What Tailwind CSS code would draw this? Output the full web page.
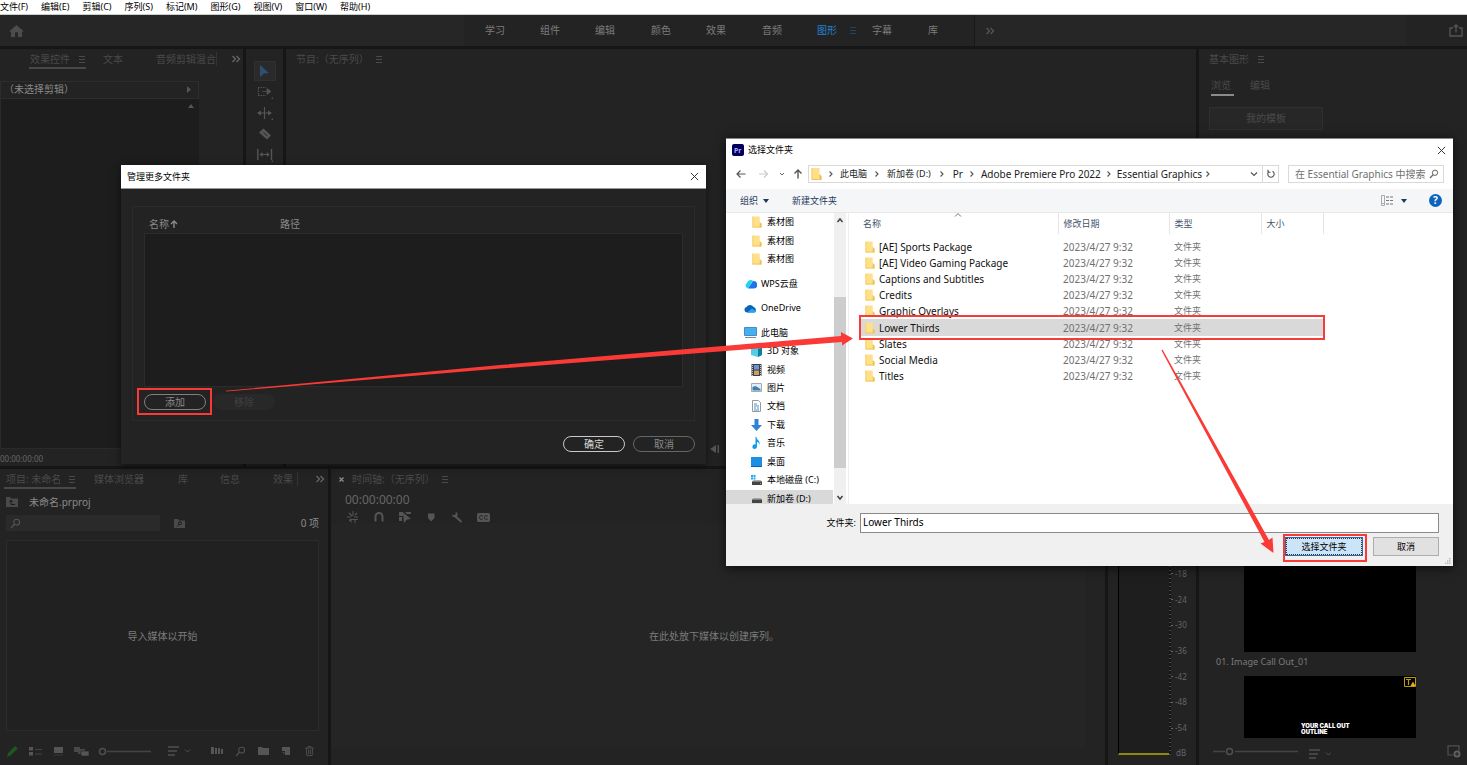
<!DOCTYPE html>
<html lang="zh-CN">

<head>
    <meta charset="UTF-8">
    <meta name="viewport" content="width=device-width, initial-scale=1.0">
    <title>选择文件夹</title>
    <script src="https://cdn.jsdelivr.net/npm/@tailwindcss/browser@4"></script>
</head>

<body class="relative flex flex-col h-screen overflow-hidden bg-[#161616] text-[#4a4a4a] text-[10px] leading-[14px] whitespace-nowrap font-['Noto_Sans','Noto_Sans_CJK_SC',sans-serif]">

    <!-- shared icons -->
    <svg class="hidden">
        <symbol id="burger" viewBox="0 0 8 8"><path d="M1 1.500h6M1 4.500h6M1 7.500h6" stroke="currentColor" fill="none"/></symbol>
        <symbol id="more" viewBox="0 0 10 8"><path d="M1.500 1l3 3-3 3M5.500 1l3 3-3 3" stroke="currentColor" stroke-width="1.300" fill="none"/></symbol>
        <symbol id="folder" viewBox="0 0 11 12"><path d="M.5 0h8v5.500L10.500 8v4H.5z" fill="#ffe08a"/><path d="M.5 0h1v12h-1z" fill="#f3cd65"/><path d="M8.500 6.500l2 1.500v4h-2z" fill="#edc04f"/><path d="M1 11.500h8" stroke="#edc55c"/></symbol>
        <symbol id="chev" viewBox="0 0 6 8"><path d="M1.500 1.500L4 4 1.500 6.500" stroke="#555" stroke-width="1.100" fill="none"/></symbol>
        <symbol id="lens" viewBox="0 0 12 12"><circle cx="7.200" cy="4.500" r="3.200" stroke="currentColor" stroke-width="1.200" fill="none"/><path d="M4.900 6.900L1.200 10.800" stroke="currentColor" stroke-width="1.500"/></symbol>
        <symbol id="close" viewBox="0 0 10 10"><path d="M1 1l8 8M9 1L1 9" stroke="#333" stroke-width="1.100"/></symbol>
        <symbol id="sort" viewBox="0 0 22 10"><path d="M0 1h11M0 5h9M0 9h7" stroke="currentColor" stroke-width="1.500"/><path d="M17 3.500l2.500 2.500L22 3.500" stroke="currentColor" fill="none"/></symbol>
    </svg>

    <!-- menu bar -->
    <nav class="flex gap-[13px] h-[15px] shrink-0 bg-white border-b border-[#c9cfc9] text-[9px] leading-[14px] text-black">
        <a href="#">文件(F)</a>
        <a href="#">编辑(E)</a>
        <a href="#">剪辑(C)</a>
        <a href="#">序列(S)</a>
        <a href="#">标记(M)</a>
        <a href="#">图形(G)</a>
        <a href="#">视图(V)</a>
        <a href="#">窗口(W)</a>
        <a href="#">帮助(H)</a>
    </nav>

    <!-- workspaces -->
    <header class="flex items-center h-[31px] shrink-0 bg-[#262626] text-[#7c7c7c]">
        <div class="w-[464px] pl-[9px]">
            <svg class="w-[15px] h-[14px] text-[#4c4c4c]" viewBox="0 0 15 14"><path d="M7.500 1L15 7.500h-2V13H9V9.500a1.500 1.500 0 0 0-3 0V13H2V7.500H0z" fill="currentColor"/></svg>
        </div>
        <div class="flex items-center h-full w-[511px] pl-[21px] pb-[2px] bg-[#232323] border-r border-[#181818]">
            <a href="#" class="w-[55px]">学习</a>
            <a href="#" class="w-[55px]">组件</a>
            <a href="#" class="w-[56px]">编辑</a>
            <a href="#" class="w-[55px]">颜色</a>
            <a href="#" class="w-[56px]">效果</a>
            <a href="#" class="w-[55px]">音频</a>
            <a href="#" class="flex items-center gap-3 w-[55px] text-[#2680d0]">图形 <svg class="size-2 text-[#1f4566]"><use href="#burger"/></svg></a>
            <a href="#" class="w-[56px]">字幕</a>
            <a href="#">库</a>
        </div>
        <svg class="w-[10px] h-2 ml-[10px] text-[#555]"><use href="#more"/></svg>
        <div class="flex justify-end items-center w-[61px] h-full ml-auto pr-1 bg-[#232323]">
            <svg class="w-[14px] h-[13px]" viewBox="0 0 14 13"><path d="M4 4H1v8h12V4h-3M7 8.500V1M4.800 3L7 1l2.200 2" stroke="#555" stroke-width="1.300" fill="none"/></svg>
        </div>
    </header>

    <main class="flex flex-1 min-h-0 gap-[3px] pt-[3px]">
        <div class="flex flex-col flex-1 min-w-0 gap-[3px]">
            <!-- upper row -->
            <div class="flex h-[417px] gap-[3px]">
                <!-- effect controls -->
                <section class="flex flex-col w-[243px] bg-[#232323]">
                    <div class="flex items-center h-5 pl-[29px] pr-[2px]">
                        <div class="flex items-center justify-between w-[57px] h-full border-b-2 border-[#484848] pt-[2px] pl-[1px]">效果控件 <svg class="size-2"><use href="#burger"/></svg></div>
                        <span class="ml-[17px]">文本</span>
                        <span class="ml-[33px] border-r border-[#333]">音频剪辑混合</span>
                        <svg class="w-[10px] h-2 ml-auto text-[#666]"><use href="#more"/></svg>
                    </div>
                    <div class="flex items-center justify-between w-[199px] h-[18px] mt-3 pl-[3px] pr-[7px] pb-[2px] border border-[#2d2d2d] text-[#8a8a8a]">（未选择剪辑）
                        <svg class="w-1 h-[7px]" viewBox="0 0 4 7"><path d="M0 0l4 3.500L0 7z" fill="#555"/></svg>
                    </div>
                    <div class="flex justify-end flex-1 w-[199px] bg-[#1d1d1d] border-l border-b border-[#2a2a2a] pt-[5px] pr-[5px]">
                        <svg class="w-[6px] h-1" viewBox="0 0 6 4"><path d="M0 4l3-4 3 4z" fill="#555"/></svg>
                    </div>
                    <p class="h-[17px] text-[8px] leading-[20px] text-[#666]">00:00:00:00</p>
                </section>
                <!-- tools -->
                <section class="flex flex-col items-center gap-[7px] w-[37px] bg-[#232323] pt-3 text-[#555]">
                    <div class="flex items-center justify-center w-[22px] h-5 bg-[#2a2a2a] border border-[#303030]">
                        <svg class="w-[9px] h-3" viewBox="0 0 9 12"><path d="M0 0l9 8-5 .5L0 12z" fill="#2c4f73"/></svg>
                    </div>
                    <svg class="w-[16px] h-[14px] -mt-[3px]" viewBox="0 0 16 14"><path d="M1 2.500h8M1 10.500h8M1.500 3v8" stroke="currentColor" stroke-dasharray="1.500 1" fill="none"/><path d="M5 6.500h6M10 3.500l4 3-4 3z" stroke="currentColor" fill="currentColor" stroke-width=".7"/><path d="M16 12v2h-2z" fill="currentColor"/></svg>
                    <svg class="w-[16px] h-[14px]" viewBox="0 0 16 14"><path d="M7.500 1v12M1 7h13" stroke="currentColor" stroke-width="1.200"/><path d="M0 7l4-2.500v5zM15 7l-4-2.500v5zM16 12v2h-2z" fill="currentColor"/></svg>
                    <svg class="w-[16px] h-[14px]" viewBox="0 0 16 14"><path d="M2 5.500l4.500-4 7.500 7-4 4z" fill="currentColor"/><path d="M6.500 5.500l4 3.500" stroke="#232323"/></svg>
                    <svg class="w-[16px] h-[14px]" viewBox="0 0 16 14"><path d="M.8 1v11M14.500 1v11" stroke="currentColor" stroke-width="1.400"/><path d="M4 6.500h8" stroke="currentColor"/><path d="M2.500 6.500l3-2.500v5zM12.800 6.500l-3-2.500v5zM16 12v2h-2z" fill="currentColor"/></svg>
                </section>
                <!-- program monitor -->
                <section class="flex flex-col justify-between flex-1 bg-[#232323]">
                    <div class="flex items-center gap-[6px] h-5 pl-[10px]">节目:（无序列） <svg class="size-2"><use href="#burger"/></svg></div>
                    <div class="h-[21px] pl-[424px]">
                        <svg class="w-[9px] h-2" viewBox="0 0 9 8"><path d="M6 0v8L0 4zM7.500 0H9v8H7.500z" fill="#555"/></svg>
                    </div>
                </section>
            </div>

            <!-- lower row -->
            <div class="flex flex-1 min-h-0 gap-[3px]">
                <!-- project -->
                <section class="flex flex-col w-[328px] bg-[#232323]">
                    <div class="flex items-center h-5 pl-1 pr-[3px]">
                        <div class="flex items-center justify-between w-[72px] h-full pt-[2px] pl-[2px] border-b-2 border-[#484848]">项目: 未命名 <svg class="size-2"><use href="#burger"/></svg></div>
                        <span class="ml-[18px]">媒体浏览器</span>
                        <span class="ml-[34px]">库</span>
                        <span class="ml-[32px]">信息</span>
                        <span class="ml-[33px] pr-1 border-r border-[#333]">效果</span>
                        <svg class="w-[10px] h-2 ml-auto text-[#666]"><use href="#more"/></svg>
                    </div>
                    <div class="flex items-center gap-[11px] h-[26px] pl-[6px] text-[#8a8a8a]">
                        <svg class="w-[12px] h-[10px]" viewBox="0 0 12 10"><path d="M0 0h4l1 1.500h7V10H0z" fill="#4a4a4a"/><path d="M5 3.500v4h4M3.500 5L5 3l1.500 2" stroke="#1c1c1c" fill="none"/></svg>
                        未命名.prproj
                    </div>
                    <div class="flex items-center h-4 pl-[6px] pr-[9px] text-[#8a8a8a]">
                        <label class="flex items-center w-[154px] h-4 pl-1 bg-[#2a2a2a] text-[#555]">
                            <svg class="size-[11px] shrink-0"><use href="#lens"/></svg>
                            <input type="text" aria-label="搜索" class="w-full outline-none">
                        </label>
                        <svg class="w-[11px] h-[9px] ml-[14px]" viewBox="0 0 11 9"><path d="M0 0h4l1 1.500h6V9H0z" fill="#4a4a4a"/><circle cx="6" cy="4.200" r="1.500" stroke="#1c1c1c" fill="none"/><path d="M5 5.500L3 7.500" stroke="#1c1c1c"/></svg>
                        <span class="ml-auto">0 项</span>
                    </div>
                    <div class="flex items-center justify-center flex-1 mt-[9px] ml-[6px] mr-[9px] border border-[#2c2c2c] bg-[#212121] text-[#7c7c7c]">导入媒体以开始</div>
                    <div class="flex items-center h-[34px] pl-[7px] pt-[6px]">
                        <svg class="w-[11px] h-[11px]" viewBox="0 0 11 11"><path d="M0 11l1-4 7-7 3 2.500-7.500 7z" fill="#1f5522"/></svg>
                        <svg class="w-[13px] h-[9px] ml-[11px]" viewBox="0 0 13 9"><path d="M0 0h4v3.500H0zM0 5h4v3.500H0z" fill="#555"/><path d="M6 2.500h7M6 7h7" stroke="#444"/></svg>
                        <svg class="w-[9px] h-[9px] ml-3" viewBox="0 0 9 9"><path d="M0 0h9v6H0z" fill="#555"/><path d="M0 8h9" stroke="#3a3a3a"/></svg>
                        <svg class="w-[15px] h-[9px] ml-[11px]" viewBox="0 0 15 9"><path d="M0 0h6v5H0zM4 2h7v5H4z" fill="#484848"/><path d="M7 4h8v5H7z" fill="#555" stroke="#232323" stroke-width=".6"/></svg>
                        <svg class="w-[53px] h-[9px] ml-[9px]" viewBox="0 0 53 9"><circle cx="4.500" cy="4.500" r="3" stroke="#505050" stroke-width="1.500" fill="none"/><path d="M9 4.500h44" stroke="#444" stroke-width="1.300"/></svg>
                        <svg class="w-[26px] h-[10px] ml-[15px] text-[#505050]"><use href="#sort"/></svg>
                        <svg class="w-[12px] h-[8px] ml-[19px]" viewBox="0 0 12 8"><path d="M0 0h3v7H0zM4 1h2v6H4zM7 1h2v6H7zM10 2h2v5h-2z" fill="#555"/></svg>
                        <svg class="size-[11px] ml-3 text-[#505050]"><use href="#lens"/></svg>
                        <svg class="w-[11px] h-2 ml-3" viewBox="0 0 11 8"><path d="M0 0h4l1 1h6v7H0z" fill="#555"/></svg>
                        <svg class="w-[8px] h-2 ml-[13px]" viewBox="0 0 8 8"><path d="M0 0h8v8H3V4H0z" fill="#555"/><path d="M0 5l2.500 3V5z" fill="#444"/></svg>
                        <svg class="w-[9px] h-[10px] ml-[15px]" viewBox="0 0 9 10"><path d="M0 2h9M3 1.500V.5h3v1M1.300 2l.5 7.500h5.400l.5-7.500M3.500 3.500v4.500M5.500 3.500v4.500" stroke="#4c4c4c" fill="none"/></svg>
                    </div>
                </section>
                <!-- timeline -->
                <section class="flex flex-col flex-1 bg-[#232323]">
                    <div class="flex items-center h-5 pl-2">
                        <svg class="w-[5px] h-[5px] mr-2" viewBox="0 0 5 5"><path d="M.5.5l4 4M4.500.5l-4 4" stroke="#8a8a8a" stroke-width="1.300"/></svg>
                        时间轴:（无序列）
                        <svg class="size-2 ml-[6px]"><use href="#burger"/></svg>
                    </div>
                    <p class="pl-[14px] h-[22px] text-[12px] leading-[22px] text-[#666]">00:00:00:00</p>
                    <div class="flex items-center gap-[14px] h-3 pl-4 text-[#555]">
                        <svg class="size-3" viewBox="0 0 12 12"><path d="M6 0v5M2 2l3 3M10 2L8 4M0 6h4M7 6h4M2 9.500L4.500 8M4 11.500v-3h7M8 9v3" stroke="currentColor" stroke-width="1.100" fill="none"/></svg>
                        <svg class="size-3" viewBox="0 0 12 12"><path d="M2.500 10.500V5.500a3.500 3.500 0 0 1 7 0v5" stroke="currentColor" stroke-width="2" fill="none"/></svg>
                        <svg class="size-3" viewBox="0 0 12 12"><path d="M0 1h4v4H0zM0 6h3v4H0zM6 1h6v2L8 3zM4 1.500L12 8l-4 .5L5 12z" fill="currentColor"/></svg>
                        <svg class="size-3" viewBox="0 0 12 12"><path d="M3 2.500h6.500v4.500L6.200 10.500 3 7z" fill="currentColor"/></svg>
                        <svg class="size-3" viewBox="0 0 12 12"><path d="M4 5l6.500 6" stroke="currentColor" stroke-width="2.200"/><path d="M1 3.500A3 3 0 0 0 5.500 6 3 3 0 0 0 4.500.8L4.800 3 3 4.200z" fill="currentColor"/></svg>
                        <svg class="w-[13px] h-[9px]" viewBox="0 0 13 9"><rect width="13" height="9" rx="1.500" fill="currentColor"/><path d="M5.800 3.200C4.500 2 2.500 2.600 2.500 4.500S4.500 7 5.800 5.800M10.800 3.200C9.500 2 7.500 2.600 7.500 4.500S9.500 7 10.800 5.800" stroke="#232323" fill="none"/></svg>
                    </div>
                    <div class="flex items-center justify-center flex-1 mr-5 mb-[17px] pl-3 bg-[#252525] text-[#7c7c7c]">在此处放下媒体以创建序列。</div>
                </section>
                <!-- audio meters -->
                <section class="flex w-[88px] bg-[#232323] pl-[10px]">
                    <div class="w-[51px] mb-[10px] bg-[#1e1e1e] border-l border-l-black border-b-2 border-b-[#8c8a12]"></div>
                    <div class="w-[2px] mb-[10px] bg-[repeating-linear-gradient(0deg,#484848_0px_1px,#161616_1px_4px)]"></div>
                    <ul class="flex flex-col justify-end flex-1 text-[8px] leading-[10px] text-[#666]">
                        <li class="flex flex-col h-[180px]">
                            <span class="flex items-center flex-1 gap-[2px]"><i class="w-[2px] h-px bg-[#666]"></i>-18</span>
                            <span class="flex items-center flex-1 gap-[2px]"><i class="w-[2px] h-px bg-[#666]"></i>-24</span>
                            <span class="flex items-center flex-1 gap-[2px]"><i class="w-[2px] h-px bg-[#666]"></i>-30</span>
                            <span class="flex items-center flex-1 gap-[2px]"><i class="w-[2px] h-px bg-[#666]"></i>-36</span>
                            <span class="flex items-center flex-1 gap-[2px]"><i class="w-[2px] h-px bg-[#666]"></i>-42</span>
                            <span class="flex items-center flex-1 gap-[2px]"><i class="w-[2px] h-px bg-[#666]"></i>-48</span>
                            <span class="flex items-center flex-1 gap-[2px]"><i class="w-[2px] h-px bg-[#666]"></i>-54</span>
                        </li>
                        <li class="flex items-center h-6 pl-[5px]">dB</li>
                    </ul>
                </section>
            </div>
        </div>

        <!-- essential graphics -->
        <aside class="flex flex-col w-[268px] bg-[#232323]">
            <div class="flex items-center gap-2 h-5 pl-[10px]">基本图形 <svg class="size-2"><use href="#burger"/></svg></div>
            <div class="flex gap-4 pl-3 mt-2 h-[19px]">
                <a href="#" class="w-[23px] border-b-2 border-[#8a8a8a] leading-[17px]">浏览</a>
                <a href="#" class="leading-[17px]">编辑</a>
            </div>
            <button class="w-[114px] h-[23px] mt-[11px] ml-[10px] pb-[2px] bg-[#272727] border border-[#2f2f2f]">我的模板</button>
            <div class="flex flex-col items-center justify-end flex-1">
                <div class="w-[172px] h-24 mr-[6px] bg-black"></div>
                <p class="self-start pl-[17px] h-6 text-[9px] leading-[20px] text-[#7c7c7c]">01. Image Call Out_01</p>
                <div class="relative w-[172px] h-[62px] mr-[6px] bg-black pl-[57px] pt-[47px] text-[6px] leading-[6px] font-black text-white font-[Inter,sans-serif]">
                    YOUR CALL OUT<br>OUTLINE
                    <svg class="absolute right-0 top-[1px] w-3 h-[10px]" viewBox="0 0 12 10"><path d="M.5.5h11v9H.5z" stroke="#c09a10" fill="none"/><path d="M2 2.500h5M4.500 2.500V8" stroke="#c09a10" stroke-width="1.200"/><path d="M6.500 9L9 4.500 11.500 9z" fill="#e0b414"/></svg>
                </div>
            </div>
            <div class="flex items-center h-[27px] pl-[14px] pr-[6px] text-[#505050]">
                <svg class="w-[85px] h-[9px]" viewBox="0 0 85 9"><path d="M0 4.500h12M22 4.500h63" stroke="#444" stroke-width="1.300"/><circle cx="16.500" cy="4.500" r="3" stroke="#505050" stroke-width="1.500" fill="none"/></svg>
                <svg class="w-[22px] h-[10px] ml-[11px] mt-1"><use href="#sort"/></svg>
                <svg class="w-[14px] h-[13px] ml-auto" viewBox="0 0 14 13"><path d="M6 10H1V.8h11V6" stroke="#505050" stroke-width="1.200" fill="none"/><circle cx="10" cy="9" r="3.500" fill="#606060"/><path d="M8 9h4M10 7v4" stroke="#232323"/></svg>
            </div>
        </aside>
    </main>

    <!-- manage folders dialog -->
    <div class="absolute left-[121px] top-[165px] flex flex-col w-[585px] h-[299px] bg-[#232323] shadow-[0_2px_8px_#0008] text-[#8a8a8a]">
        <div class="flex items-center justify-between h-6 pl-[6px] pr-[7px] bg-white border-b border-[#999] text-[9px] text-black">
            管理更多文件夹
            <button aria-label="关闭"><svg class="size-[9px]"><use href="#close"/></svg></button>
        </div>
        <div class="flex flex-col h-[215px] mt-[17px] mx-[11px] px-[11px] border border-[#2b2b2b]">
            <div class="flex items-end h-[26px] pb-[2px]">
                <span class="flex items-center gap-[1px] w-[136px] pl-[5px]">名称 <svg class="w-2 h-2" viewBox="0 0 8 8"><path d="M4 8V1.500M1 4l3-3 3 3" stroke="currentColor" stroke-width="1.400" fill="none"/></svg></span>
                <span>路径</span>
            </div>
            <div class="h-[154px] bg-[#1d1d1d] border border-[#2c2c2c]"></div>
            <div class="flex gap-[7px] mt-[7px]">
                <button class="w-[62px] h-4 border border-[#808080] rounded-full leading-[13px]">添加</button>
                <button disabled class="w-[62px] h-4 bg-[#282828] rounded-full leading-[13px] text-[#404040]">移除</button>
            </div>
        </div>
        <div class="flex justify-end gap-2 mt-[15px] pr-[11px]">
            <button class="w-[62px] h-4 border border-[#c8c8c8] rounded-full leading-[13px] text-[#d8d8d8]">确定</button>
            <button class="w-[62px] h-4 border border-[#666] rounded-full leading-[13px]">取消</button>
        </div>
    </div>

    <!-- folder picker -->
    <div class="absolute left-[726px] top-[138px] flex flex-col w-[727px] h-[428px] bg-white border-t border-[#888] shadow-[0_2px_10px_#000a] text-[#222]">
        <div class="flex items-center gap-1 h-[22px] pl-[6px] pr-[7px] text-[9px] text-black">
            <svg class="size-3" viewBox="0 0 12 12"><rect width="12" height="12" rx="2" fill="#00005b"/><text x="2" y="8.500" font-size="7" font-weight="bold" fill="#b3a5ff">Pr</text></svg>
            选择文件夹
            <button class="ml-auto" aria-label="关闭"><svg class="size-[9px]"><use href="#close"/></svg></button>
        </div>
        <div class="flex items-center h-7 pl-[10px] pr-[9px] pb-[2px]">
            <svg class="w-[68px] h-[10px] mr-1" viewBox="0 0 68 10"><g fill="none"><path d="M9.500 5H1M4.500 1.500L1 5l3.500 3.500" stroke="#555" stroke-width="1.200"/><path d="M23 5h8.500M28 1.500L31.500 5 28 8.500" stroke="#ccc" stroke-width="1.200"/><path d="M44 4l2 2 2-2" stroke="#666"/><path d="M62 9.500V1M58.500 4.500L62 1l3.500 3.500" stroke="#555" stroke-width="1.400"/></g></svg>
            <div class="flex items-center w-[471px] h-[18px] pl-[2px] border border-[#d9d9d9]">
                <svg class="w-[11px] h-3"><use href="#folder"/></svg>
                <svg class="w-[6px] h-2 mx-[6px]"><use href="#chev"/></svg>
                <span class="text-[9px]">此电脑</span>
                <svg class="w-[6px] h-2 mx-[7px]"><use href="#chev"/></svg>
                <span class="text-[9px]">新加卷 (D:)</span>
                <svg class="w-[6px] h-2 mx-[8px]"><use href="#chev"/></svg>
                <span>Pr</span>
                <svg class="w-[6px] h-2 mx-[6px]"><use href="#chev"/></svg>
                <span>Adobe Premiere Pro 2022</span>
                <svg class="w-[6px] h-2 mx-[5px]"><use href="#chev"/></svg>
                <span>Essential Graphics</span>
                <svg class="w-[6px] h-2 mx-[3px]"><use href="#chev"/></svg>
                <svg class="w-2 h-[6px] ml-auto mr-1" viewBox="0 0 8 6"><path d="M1 1.500l3 3 3-3" stroke="#555" stroke-width="1.200" fill="none"/></svg>
                <div class="flex items-center h-full pl-1 pr-[3px] border-l border-[#d9d9d9]">
                    <svg class="w-2 h-[10px]" viewBox="0 0 8 10"><path d="M5.500 2.200A3.200 3.200 0 1 1 2 2.500M1 .8v2.400h2.500" stroke="#555" stroke-width="1.100" fill="none"/></svg>
                </div>
            </div>
            <label class="flex items-center w-[156px] h-[18px] ml-auto pl-[6px] pr-1 border border-[#d9d9d9] text-[#666]">
                <input type="text" placeholder="在 Essential Graphics 中搜索" aria-label="搜索" class="flex-1 min-w-0 outline-none placeholder:text-[#707070]">
                <svg class="size-[10px] shrink-0"><use href="#lens"/></svg>
            </label>
        </div>
        <div class="flex items-center h-6 pl-[14px] pr-[11px] bg-[#f5f6f7] border-b border-[#e8e8e8] text-[9px] text-[#1e395b]">
            <button class="flex items-center gap-[5px]">组织 <svg class="w-[6px] h-1" viewBox="0 0 6 4"><path d="M0 0h6L3 4z" fill="#1e395b"/></svg></button>
            <button class="ml-[23px]">新建文件夹</button>
            <svg class="w-3 h-[11px] ml-auto" viewBox="0 0 12 11"><path d="M.5.5h3v10h-3z" stroke="#aaa" fill="none"/><path d="M5 2h3M9 2h3M5 5.500h3M9 5.500h3M5 9h3M9 9h3" stroke="#777"/><path d="M1.500 8h1v1h-1z" fill="#c44"/></svg>
            <svg class="w-[6px] h-1 ml-2 mr-[22px]" viewBox="0 0 6 4"><path d="M0 0h6L3 4z" fill="#1e395b"/></svg>
            <button class="size-[13px] rounded-full bg-[#0b64c0] text-[10px] leading-[13px] font-bold text-white">?</button>
        </div>

        <div class="flex flex-1 min-h-0 overflow-hidden">
            <!-- tree -->
            <ul class="flex flex-col w-[107px] h-[295px] shrink-0 text-[9px] text-black">
                <li class="flex flex-1 items-center gap-[5px] pl-[26px]"><svg class="w-[10px] h-3"><use href="#folder"/></svg>素材图</li>
                <li class="flex flex-1 items-center gap-[5px] pl-[26px]"><svg class="w-[10px] h-3"><use href="#folder"/></svg>素材图</li>
                <li class="flex flex-1 items-center gap-[5px] pl-[26px]"><svg class="w-[10px] h-3"><use href="#folder"/></svg>素材图</li>
                <li class="flex flex-1 items-center gap-1 pl-[19px] mt-[6px]"><svg class="w-3 h-[10px]" viewBox="0 0 12 10"><path d="M3 9.500A3 3 0 0 1 2 4 4 4 0 0 1 8 1.500z" fill="#25d3e6"/><path d="M3 9.500L8 2a3.500 3.500 0 0 1 1 7.500z" fill="#1b76ea"/></svg>WPS云盘</li>
                <li class="flex flex-1 items-center gap-1 pl-[18px] mt-[6px]"><svg class="w-[13px] h-[9px]" viewBox="0 0 13 9"><path d="M3 8.500A2.800 2.800 0 0 1 2.500 3 4 4 0 0 1 9.500 3a3 3 0 0 1 1 5.500z" fill="#0a63b8"/><path d="M3 8.500l5-4 4 2.500a2 2 0 0 1-2 1.500z" fill="#29a3ec"/></svg>OneDrive</li>
                <li class="flex flex-1 items-center gap-1 pl-[18px] mt-[6px]"><svg class="w-[13px] h-[11px]" viewBox="0 0 13 11"><path d="M.5.5h12v8H.5z" fill="#45b0f0" stroke="#4a8bbf"/><path d="M1 10.500h11" stroke="#789"/></svg>此电脑</li>
                <li class="flex flex-1 items-center gap-[5px] pl-[25px]"><svg class="w-[11px] h-[11px]" viewBox="0 0 11 11"><path d="M0 2l7-2 4 1v8l-4 2-7-2z" fill="#4fd0e4"/><path d="M7 3l4-2v8l-4 2z" fill="#0e7f9e"/></svg>3D 对象</li>
                <li class="flex flex-1 items-center gap-[5px] pl-[25px]"><svg class="w-[11px] h-[12px]" viewBox="0 0 11 12"><path d="M.5 0h10v12H.5z" fill="#3a3f48"/><path d="M3 1h5v4.500H3z" fill="#6a96d8"/><path d="M3 6.500h5V11H3z" fill="#c8a05a"/><path d="M1.500 1v11M9.500 1v11" stroke="#ccc" stroke-dasharray="1 1"/></svg>视频</li>
                <li class="flex flex-1 items-center gap-[5px] pl-[25px]"><svg class="w-[11px] h-[9px]" viewBox="0 0 11 9"><path d="M.5.5h10v8H.5z" fill="#dfeefa" stroke="#aaa"/><path d="M1.500 4l3-1 5 3v1.500h-8z" fill="#3f7fae"/></svg>图片</li>
                <li class="flex flex-1 items-center gap-[5px] pl-[25px]"><svg class="w-[11px] h-[12px]" viewBox="0 0 11 12"><path d="M1.500.5h6l2 2v9h-8z" fill="#fff" stroke="#999"/><path d="M3 4h3M3 6h5M3 8h2M6 8h2M3 10h5" stroke="#4a90c8"/></svg>文档</li>
                <li class="flex flex-1 items-center gap-[5px] pl-[25px]"><svg class="w-[11px] h-[12px]" viewBox="0 0 11 12"><path d="M3.500 0h4v6H11l-5.500 6L0 6h3.500z" fill="#2f83d6"/></svg>下载</li>
                <li class="flex flex-1 items-center gap-[5px] pl-[25px]"><svg class="w-[11px] h-[12px]" viewBox="0 0 11 12"><path d="M5.500 0c0 3 4 3.500 3 8-.3-2-1-3-2.500-3v4.500A2.300 2.300 0 1 1 4.500 7.500V0z" fill="#129bea"/></svg>音乐</li>
                <li class="flex flex-1 items-center gap-[5px] pl-[25px]"><svg class="w-[11px] h-[10px]" viewBox="0 0 11 10"><path d="M0 0h11v10H0z" fill="#1b8fe6"/><path d="M0 9h11v1H0z" fill="#0b63ad"/></svg>桌面</li>
                <li class="flex flex-1 items-center gap-[5px] pl-[25px]"><svg class="w-[11px] h-[10px]" viewBox="0 0 11 10"><path d="M0 0h2v2H0zM2.500 0h2v2h-2zM0 2.500h2v2H0zM2.500 2.500h2v2h-2z" fill="#23a8e8"/><path d="M1 6.500l1.500-1h7l1.500 1V10H1z" fill="#444"/><path d="M1 6.500l1.500-1h7l1.500 1z" fill="#bbb"/><path d="M9 8h1v1H9z" fill="#5d5"/></svg>本地磁盘 (C:)</li>
                <li class="flex flex-1 items-center gap-[5px] pl-[25px] bg-[#d9d9d9]"><svg class="w-[11px] h-[10px]" viewBox="0 0 11 10"><path d="M1 5.500l1.500-1h7l1.500 1V9H1z" fill="#444"/><path d="M1 5.500l1.500-1h7l1.500 1z" fill="#bbb"/></svg>新加卷 (D:)</li>
            </ul>
            <!-- tree scrollbar -->
            <div class="flex flex-col items-center w-3 ml-[1px] bg-[#f0f0f0]">
                <svg class="w-2 h-[14px]" viewBox="0 0 8 14"><path d="M1.500 9L4 6l2.500 3" stroke="#444" stroke-width="1.500" fill="none"/></svg>
                <div class="w-full mt-[70px] flex-1 bg-[#cdcdcd]"></div>
                <svg class="w-2 h-9" viewBox="0 0 8 36"><path d="M1.500 28L4 31l2.500-3" stroke="#444" stroke-width="1.500" fill="none"/></svg>
            </div>
            <!-- files -->
            <div class="relative flex-1 ml-[2px] pl-[12px] border-l border-[#eee]">
                <svg class="absolute left-[105px] top-0 w-2 h-1" viewBox="0 0 8 4"><path d="M1 3.500l3-3 3 3" stroke="#777" fill="none"/></svg>
                <table class="w-[463px] table-fixed border-collapse text-[#707070]">
                    <thead class="text-[9px] text-[#44546a]">
                        <tr class="h-[21px] text-left">
                            <th class="w-[197px] p-0 pl-[2px] font-normal border-r border-[#e5e5e5]">名称</th>
                            <th class="w-[111px] p-0 pl-[5px] font-normal border-r border-[#e5e5e5]">修改日期</th>
                            <th class="w-[92px] p-0 pl-[5px] font-normal border-r border-[#e5e5e5]">类型</th>
                            <th class="p-0 pl-[5px] font-normal border-r border-[#e5e5e5]">大小</th>
                        </tr>
                        <tr class="h-[5px]"><td colspan="4" class="p-0"></td></tr>
                    </thead>
                    <tbody>
                        <tr class="h-4">
                            <td class="p-0 pl-1 text-[#111]"><span class="flex items-center gap-1"><svg class="w-[10px] h-3"><use href="#folder"/></svg>[AE] Sports Package</span></td>
                            <td class="p-0 pl-[5px]">2023/4/27 9:32</td>
                            <td class="p-0 pl-[5px] text-[9px]">文件夹</td>
                            <td></td>
                        </tr>
                        <tr class="h-4">
                            <td class="p-0 pl-1 text-[#111]"><span class="flex items-center gap-1"><svg class="w-[10px] h-3"><use href="#folder"/></svg>[AE] Video Gaming Package</span></td>
                            <td class="p-0 pl-[5px]">2023/4/27 9:32</td>
                            <td class="p-0 pl-[5px] text-[9px]">文件夹</td>
                            <td></td>
                        </tr>
                        <tr class="h-4">
                            <td class="p-0 pl-1 text-[#111]"><span class="flex items-center gap-1"><svg class="w-[10px] h-3"><use href="#folder"/></svg>Captions and Subtitles</span></td>
                            <td class="p-0 pl-[5px]">2023/4/27 9:32</td>
                            <td class="p-0 pl-[5px] text-[9px]">文件夹</td>
                            <td></td>
                        </tr>
                        <tr class="h-4">
                            <td class="p-0 pl-1 text-[#111]"><span class="flex items-center gap-1"><svg class="w-[10px] h-3"><use href="#folder"/></svg>Credits</span></td>
                            <td class="p-0 pl-[5px]">2023/4/27 9:32</td>
                            <td class="p-0 pl-[5px] text-[9px]">文件夹</td>
                            <td></td>
                        </tr>
                        <tr class="h-4">
                            <td class="p-0 pl-1 text-[#111]"><span class="flex items-center gap-1"><svg class="w-[10px] h-3"><use href="#folder"/></svg>Graphic Overlays</span></td>
                            <td class="p-0 pl-[5px]">2023/4/27 9:32</td>
                            <td class="p-0 pl-[5px] text-[9px]">文件夹</td>
                            <td></td>
                        </tr>
                        <tr class="h-[17px] bg-[#d9d9d9]">
                            <td class="p-0 pl-1 text-[#111]"><span class="flex items-center gap-1"><svg class="w-[10px] h-3"><use href="#folder"/></svg>Lower Thirds</span></td>
                            <td class="p-0 pl-[5px]">2023/4/27 9:32</td>
                            <td class="p-0 pl-[5px] text-[9px]">文件夹</td>
                            <td></td>
                        </tr>
                        <tr class="h-4">
                            <td class="p-0 pl-1 text-[#111]"><span class="flex items-center gap-1"><svg class="w-[10px] h-3"><use href="#folder"/></svg>Slates</span></td>
                            <td class="p-0 pl-[5px]">2023/4/27 9:32</td>
                            <td class="p-0 pl-[5px] text-[9px]">文件夹</td>
                            <td></td>
                        </tr>
                        <tr class="h-4">
                            <td class="p-0 pl-1 text-[#111]"><span class="flex items-center gap-1"><svg class="w-[10px] h-3"><use href="#folder"/></svg>Social Media</span></td>
                            <td class="p-0 pl-[5px]">2023/4/27 9:32</td>
                            <td class="p-0 pl-[5px] text-[9px]">文件夹</td>
                            <td></td>
                        </tr>
                        <tr class="h-4">
                            <td class="p-0 pl-1 text-[#111]"><span class="flex items-center gap-1"><svg class="w-[10px] h-3"><use href="#folder"/></svg>Titles</span></td>
                            <td class="p-0 pl-[5px]">2023/4/27 9:32</td>
                            <td class="p-0 pl-[5px] text-[9px]">文件夹</td>
                            <td></td>
                        </tr>
                    </tbody>
                </table>
            </div>
        </div>

        <div class="relative h-[62px] pt-[9px] pr-[14px] bg-[#f0f0f0] text-black">
            <div class="flex items-center">
                <label for="folderName" class="w-[134px] pr-1 text-right text-[9px]">文件夹:</label>
                <input id="folderName" type="text" value="Lower Thirds" class="flex-1 h-5 px-[2px] pb-[2px] bg-white border border-[#8a8a8a] outline-none">
            </div>
            <div class="flex justify-end gap-[10px] mt-1 text-[9px]">
                <button class="w-[78px] h-[19px] bg-[#cce4f7] border border-[#2a6cab] outline-1 -outline-offset-2 outline-dotted outline-[#333]">选择文件夹</button>
                <button class="w-[66px] h-[19px] bg-[#e1e1e1] border border-[#adadad]">取消</button>
            </div>
            <svg class="absolute right-[2px] bottom-[2px] size-[6px]" viewBox="0 0 6 6"><path d="M4 0h1.500v1.500H4zM4 2.200h1.500v1.500H4zM4 4.400h1.500V6H4zM2 2.200h1.400v1.500H2zM2 4.400h1.400V6H2zM0 4.400h1.400V6H0z" fill="#bbb"/></svg>
        </div>
    </div>

    <!-- red marks -->
    <svg class="absolute inset-0 w-full h-full pointer-events-none">
        <g fill="none" stroke="#fa3a36" stroke-width="2">
            <rect x="138" y="389" width="73" height="25"/>
            <rect x="860" y="316" width="464" height="23"/>
            <rect x="1284" y="535" width="82" height="26"/>
        </g>
        <g fill="#fa3a36">
            <path d="M226 390.700L500 365 841 336V332L853 338.500 842 345.500V342L500 368.500 226 391.500z"/>
            <path d="M1161.500 350.500L1162.500 349.500 1269 540 1272.500 537.500 1273.500 553 1260.500 543.500 1264.500 542z"/>
        </g>
    </svg>
</body>

</html>
